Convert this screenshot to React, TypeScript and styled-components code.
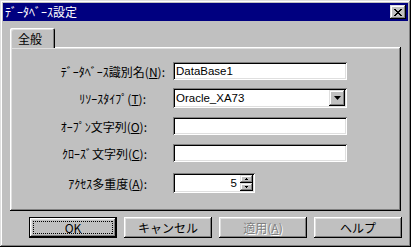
import React from 'react'
import styled, { createGlobalStyle } from 'styled-components'

const GlobalStyle = createGlobalStyle`
  html, body {
    margin: 0;
    padding: 0;
    background: #c0c0c0;
  }
  body {
    font-family: "Noto Sans CJK JP", "DejaVu Sans", sans-serif;
    font-size: 12px;
    color: #000;
  }
`

const raised = `
  box-shadow: inset -1px -1px #000, inset 1px 1px #dfdfdf,
    inset -2px -2px #808080, inset 2px 2px #fff;
`
const raisedPanel = `
  box-shadow: inset -1px -1px #000, inset 1px 1px #fff,
    inset -2px -2px #808080, inset 2px 2px #dfdfdf;
`
const sunken = `
  box-shadow: inset 1px 1px #808080, inset -1px -1px #fff,
    inset 2px 2px #000, inset -2px -2px #dfdfdf;
`

const Window = styled.div`
  width: 411px;
  height: 247px;
  box-sizing: border-box;
  padding: 3px;
  background: #c0c0c0;
  ${raised}
  display: flex;
  flex-direction: column;
`
const TitleBar = styled.div`
  height: 18px;
  background: #000080;
  color: #fff;
  display: flex;
  align-items: center;
  justify-content: space-between;
  padding: 0 2px 0 2px;
  line-height: 18px;
`
const TitleText = styled.div`
  font-size: 12px;
`
const CloseButton = styled.div`
  width: 16px;
  height: 14px;
  background: #c0c0c0;
  ${raised}
  display: flex;
  align-items: center;
  justify-content: center;
`
const Body = styled.div`
  flex: 1;
  display: flex;
  flex-direction: column;
  padding: 7px 7px 0 7px;
`
const TabStrip = styled.div`
  display: flex;
  height: 20px;
  margin-bottom: -1px;
  position: relative;
  z-index: 1;
`
const Tab = styled.div`
  height: 20px;
  box-sizing: border-box;
  padding: 0 13px 0 8px;
  background: #c0c0c0;
  border-top-left-radius: 2px;
  border-top-right-radius: 2px;
  box-shadow: inset 1px 1px #fff, inset -1px 0 #000, inset -2px 0 #808080,
    inset 2px 2px #dfdfdf;
  display: flex;
  align-items: center;
  font-size: 12px;
`
const Panel = styled.div`
  height: 164px;
  box-sizing: border-box;
  ${raisedPanel}
`
const Form = styled.div`
  display: grid;
  grid-template-columns: 155px auto;
  grid-template-rows: 26px 29px 27px 29px 20px;
  column-gap: 8px;
  align-items: start;
  padding-top: 15px;
`
const Label = styled.div<{ $h: number; $inset: number }>`
  height: ${p => p.$h}px;
  display: flex;
  align-items: center;
  justify-content: flex-end;
  padding-right: ${p => p.$inset}px;
  white-space: nowrap;
  font-size: 12px;
  u {
    text-decoration: underline;
    text-underline-offset: 1px;
  }
`
const Field = styled.div<{ $w: number; $h: number }>`
  width: ${p => p.$w}px;
  height: ${p => p.$h}px;
  box-sizing: border-box;
  background: #fff;
  ${sunken}
  display: flex;
  align-items: center;
  padding: 0 2px 0 3px;
  font-family: "Liberation Sans", Arial, sans-serif;
  font-size: 11.5px;
`
const ComboText = styled.div`
  flex: 1;
`
const DropButton = styled.div`
  width: 16px;
  height: 16px;
  background: #c0c0c0;
  ${raised}
  display: flex;
  align-items: center;
  justify-content: center;
`
const SpinValue = styled.div`
  flex: 1;
  text-align: right;
  padding-right: 3px;
`
const SpinButtons = styled.div`
  display: flex;
  flex-direction: column;
  height: 16px;
`
const SpinButton = styled.div`
  width: 13px;
  height: 8px;
  background: #c0c0c0;
  ${raised}
  display: flex;
  align-items: center;
  justify-content: center;
`
const ButtonRow = styled.div`
  display: flex;
  justify-content: flex-end;
  gap: 7px;
  margin-top: 6px;
  margin-right: -1px;
`
const Button = styled.div<{ $default?: boolean; $disabled?: boolean }>`
  width: 88px;
  height: 21px;
  box-sizing: border-box;
  background: #c0c0c0;
  border: ${p => (p.$default ? '1px solid #000' : 'none')};
  ${raisedPanel}
  display: flex;
  align-items: center;
  justify-content: center;
  font-size: 12px;
  color: ${p => (p.$disabled ? '#808080' : '#000')};
  text-shadow: ${p => (p.$disabled ? '1px 1px #fff' : 'none')};
  position: relative;
  u {
    text-underline-offset: 1px;
  }
`
const FocusRect = styled.div`
  position: absolute;
  inset: 3px;
  pointer-events: none;
  background:
    linear-gradient(90deg, #000 50%, transparent 50%) top left / 2px 1px repeat-x,
    linear-gradient(90deg, #000 50%, transparent 50%) bottom left / 2px 1px repeat-x,
    linear-gradient(180deg, #000 50%, transparent 50%) top left / 1px 2px repeat-y,
    linear-gradient(180deg, #000 50%, transparent 50%) top right / 1px 2px repeat-y;
`

function DownArrow() {
  return (
    <svg width="7" height="4" viewBox="0 0 7 4">
      <path d="M0 0H7L3.5 4Z" fill="#000" />
    </svg>
  )
}

function SmallArrow({ up }: { up?: boolean }) {
  return (
    <svg width="3" height="2" viewBox="0 0 3 2">
      <path d={up ? 'M1 0h1v1h1v1H0V1h1Z' : 'M0 0h3v1H2v1H1V1H0Z'} fill="#000" />
    </svg>
  )
}

export default function App() {
  return (
    <>
      <GlobalStyle />
      <Window>
        <TitleBar>
          <TitleText>ﾃﾞｰﾀﾍﾞｰｽ設定</TitleText>
          <CloseButton>
            <svg width="8" height="7" viewBox="0 0 8 7">
              <path d="M0 0L7 7M1 0L8 7M7 0L0 7M8 0L1 7" stroke="#000" strokeWidth="1" />
            </svg>
          </CloseButton>
        </TitleBar>
        <Body>
          <TabStrip>
            <Tab>全般</Tab>
          </TabStrip>
          <Panel>
            <Form>
              <Label $h={18} $inset={0}>
                ﾃﾞｰﾀﾍﾞｰｽ識別名(<u>N</u>):
              </Label>
              <Field $w={174} $h={18}>DataBase1</Field>

              <Label $h={20} $inset={19}>
                ﾘｿｰｽﾀｲﾌﾟ(<u>T</u>):
              </Label>
              <Field $w={174} $h={20}>
                <ComboText>Oracle_XA73</ComboText>
                <DropButton>
                  <DownArrow />
                </DropButton>
              </Field>

              <Label $h={18} $inset={18}>
                ｵｰﾌﾟﾝ文字列(<u>O</u>):
              </Label>
              <Field $w={174} $h={18} />

              <Label $h={18} $inset={18}>
                ｸﾛｰｽﾞ文字列(<u>C</u>):
              </Label>
              <Field $w={174} $h={18} />

              <Label $h={20} $inset={18}>
                ｱｸｾｽ多重度(<u>A</u>):
              </Label>
              <Field $w={82} $h={20}>
                <SpinValue>5</SpinValue>
                <SpinButtons>
                  <SpinButton>
                    <SmallArrow up />
                  </SpinButton>
                  <SpinButton>
                    <SmallArrow />
                  </SpinButton>
                </SpinButtons>
              </Field>
            </Form>
          </Panel>
          <ButtonRow>
            <Button $default>
              OK
              <FocusRect />
            </Button>
            <Button>キャンセル</Button>
            <Button $disabled>
              適用(<u>A</u>)
            </Button>
            <Button>ヘルプ</Button>
          </ButtonRow>
        </Body>
      </Window>
    </>
  )
}
